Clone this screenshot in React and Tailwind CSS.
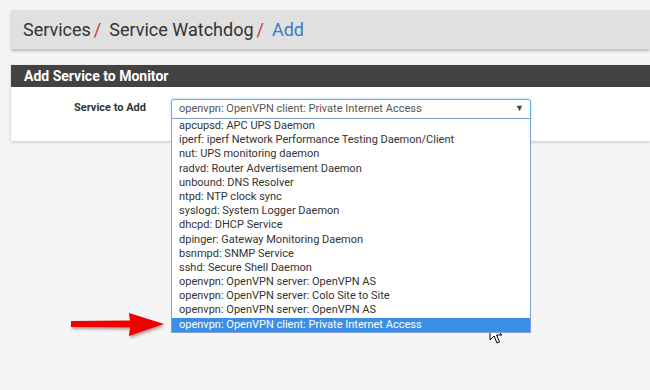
import React from "react";

const items = [
  "apcupsd: APC UPS Daemon",
  "iperf: iperf Network Performance Testing Daemon/Client",
  "nut: UPS monitoring daemon",
  "radvd: Router Advertisement Daemon",
  "unbound: DNS Resolver",
  "ntpd: NTP clock sync",
  "syslogd: System Logger Daemon",
  "dhcpd: DHCP Service",
  "dpinger: Gateway Monitoring Daemon",
  "bsnmpd: SNMP Service",
  "sshd: Secure Shell Daemon",
  "openvpn: OpenVPN server: OpenVPN AS",
  "openvpn: OpenVPN server: Colo Site to Site",
  "openvpn: OpenVPN server: OpenVPN AS",
  "openvpn: OpenVPN client: Private Internet Access",
];

export default function App() {
  return (
    <div className="w-[650px] h-[390px] overflow-hidden bg-[#f5f5f5] relative font-['Roboto',sans-serif] text-[#333]">
      <div className="pt-[10px] pl-[11px]">
        <div className="h-[39px] bg-[#e0e0e0] shadow-[0_2px_3px_rgba(0,0,0,0.25)] flex items-center pl-[12px] text-[18px] leading-none">
          <span>Services</span>
          <span className="text-[#c0392b] ml-[3px]">/</span>
          <span className="ml-[8px]">Service Watchdog</span>
          <span className="text-[#c0392b] ml-[3px]">/</span>
          <span className="ml-[8px] text-[#3a7bc8]">Add</span>
        </div>
        <div className="mt-[16px] shadow-[0_1px_3px_rgba(0,0,0,0.2)]">
          <div className="h-[22px] bg-[#424242] text-white font-bold text-[14px] flex items-center pl-[13px]">
            Add Service to Monitor
          </div>
          <div className="bg-white h-[54px] flex items-start">
            <div className="w-[135px] text-right font-bold text-[11px] pt-[13px] text-[#333]">Service to Add</div>
            <div className="ml-[25px] mt-[12px] relative">
              <div className="w-[360px] h-[20px] border border-[#66afe9] rounded-t-[3px] shadow-[0_0_3px_rgba(102,175,233,0.6)] flex items-center pl-[7px] pr-[6px] text-[11px] text-[#555] bg-white">
                <span className="flex-1">openvpn: OpenVPN client: Private Internet Access</span>
                <span className="text-[9px] text-[#444]">▼</span>
              </div>
              <div className="absolute left-0 top-[19px] w-[360px] border border-[#7f9fd8] bg-white z-10">
                {items.map((t, i) => (
                  <div
                    key={i}
                    className={
                      "h-[14.2px] leading-[14.2px] pl-[7px] text-[11px] whitespace-nowrap " +
                      (i === items.length - 1 ? "bg-[#3a8ee6] text-white" : "text-[#333]")
                    }
                  >
                    {t}
                  </div>
                ))}
              </div>
            </div>
          </div>
        </div>
      </div>

      <svg className="absolute left-[66px] top-[309px]" width="104" height="32" viewBox="0 0 104 32">
        <defs>
          <filter id="sh" x="-20%" y="-40%" width="140%" height="180%">
            <feDropShadow dx="1" dy="2" stdDeviation="1.5" floodColor="#000" floodOpacity="0.35" />
          </filter>
        </defs>
        <path d="M5 12 L64 11.5 L63 4 L98 15 L63 27 L64 18.5 L5 18 Z" fill="#f00000" filter="url(#sh)" />
      </svg>

      <svg className="absolute left-[489px] top-[323px]" width="14" height="22" viewBox="0 0 14 22">
        <path d="M1 1 L1 17 L5 13 L8 20 L10.5 19 L7.5 12 L13 12 Z" fill="#fff" stroke="#000" strokeWidth="1" strokeLinejoin="miter" />
      </svg>
    </div>
  );
}
